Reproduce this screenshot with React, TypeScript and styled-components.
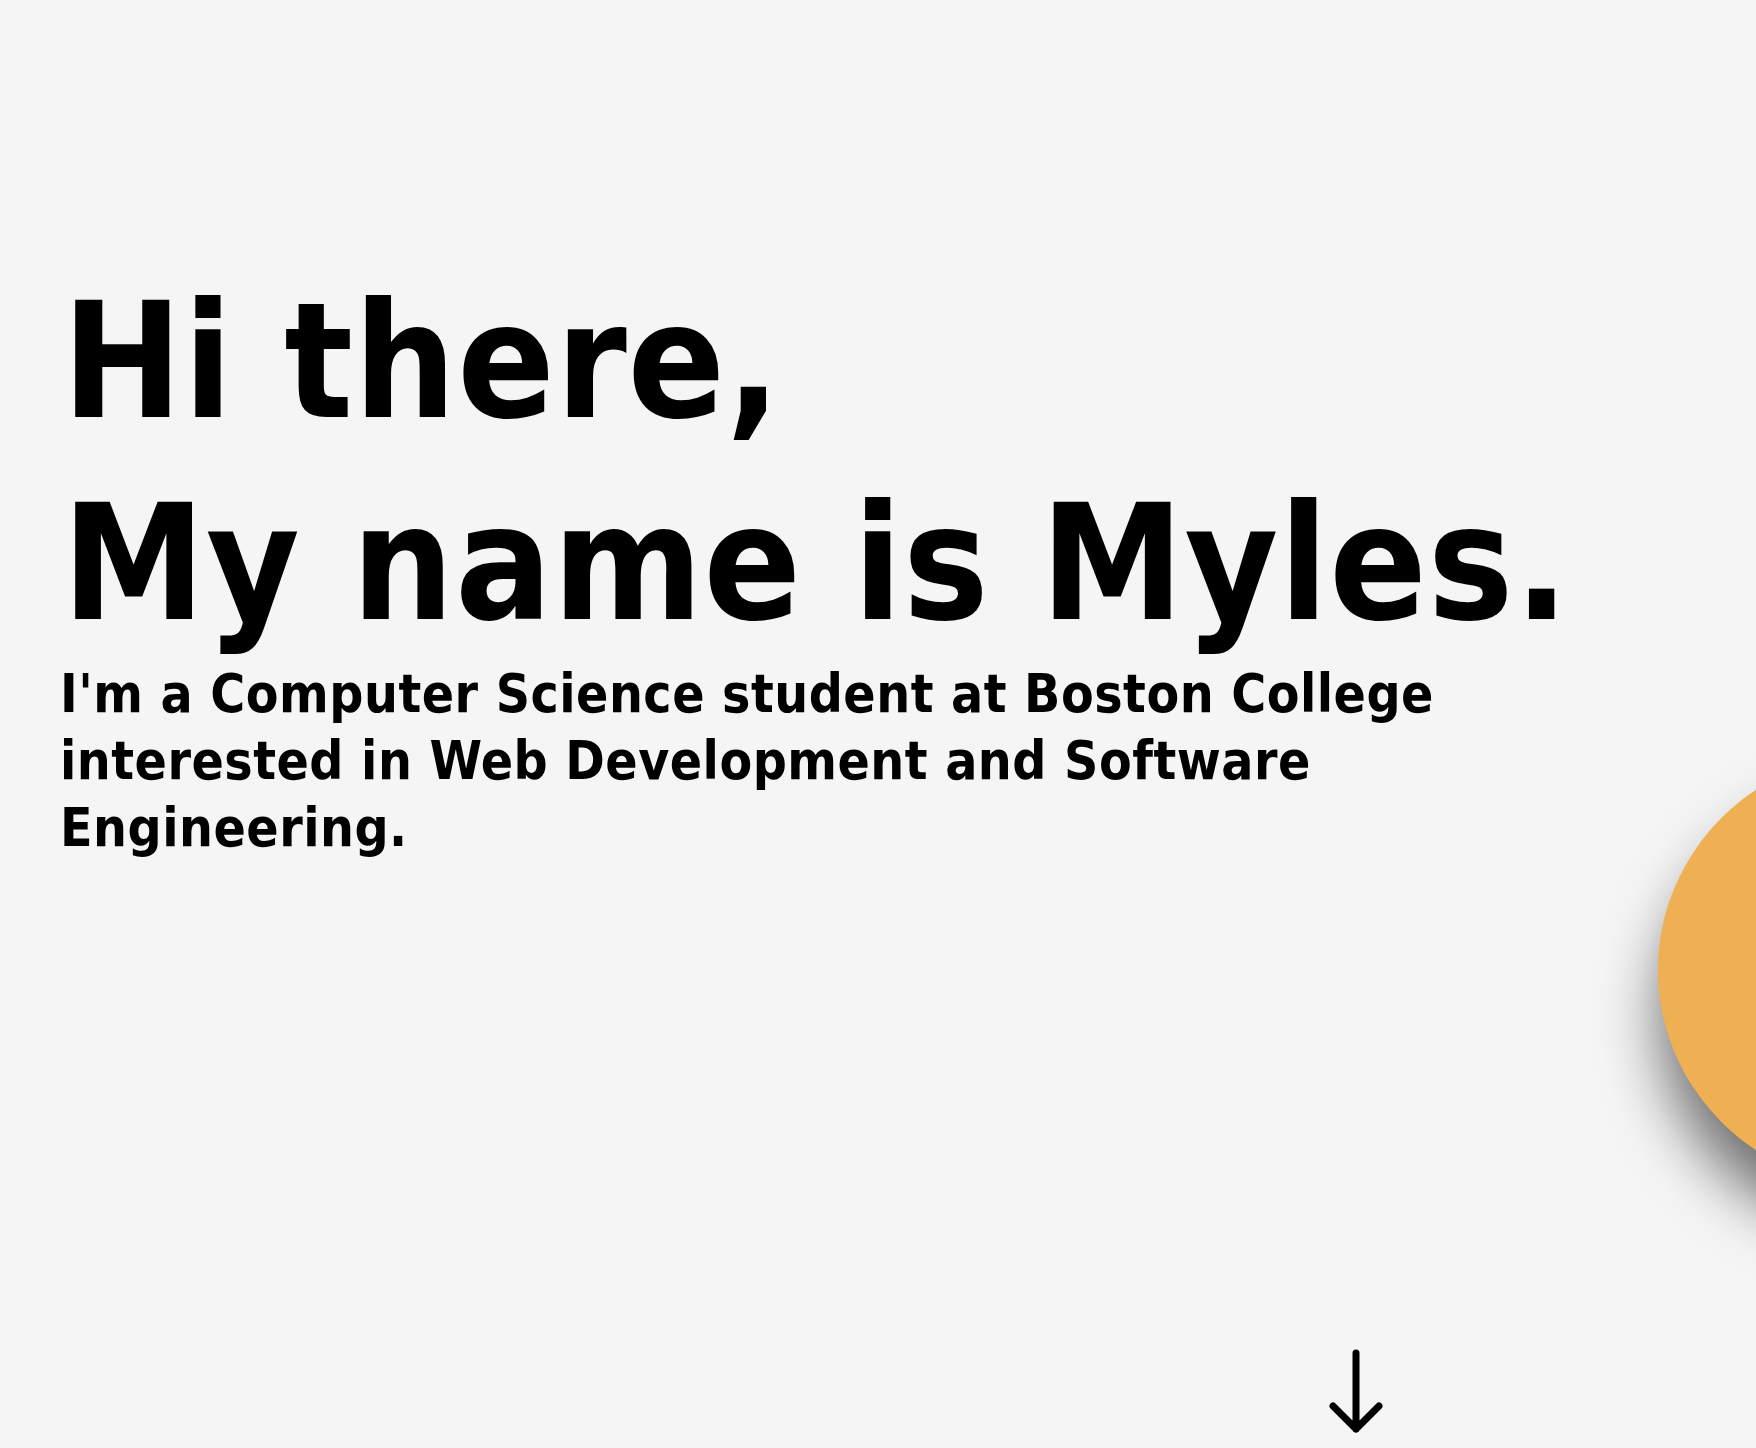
import React from "react";
import styled, { createGlobalStyle } from "styled-components";

const GlobalStyle = createGlobalStyle`
  html, body {
    margin: 0;
    padding: 0;
    background: #f5f5f5;
    overflow: hidden;
  }
  body {
    font-family: "DejaVu Sans Condensed", "DejaVu Sans", sans-serif;
    color: #000;
  }
`;

const Page = styled.main`
  position: relative;
  width: 100%;
  height: 1448px;
  overflow: hidden;
  background: #f5f5f5;
`;

const Hero = styled.section`
  display: flex;
  flex-direction: column;
  padding: 261px 0 0 60px;
`;

const Heading = styled.h1`
  margin: 0 0 0 2px;
  font-family: "DejaVu Sans Condensed", "DejaVu Sans", sans-serif;
  font-weight: 700;
  font-size: 160px;
  line-height: 202px;
  letter-spacing: 0.8px;
  white-space: nowrap;
`;

const Intro = styled.p`
  margin: -5px 0 0 0;
  max-width: 1440px;
  font-family: "DejaVu Sans Condensed", "DejaVu Sans", sans-serif;
  font-weight: 700;
  font-size: 53px;
  line-height: 67px;
  letter-spacing: 0.5px;
`;

const Blob = styled.div`
  position: absolute;
  left: 1658px;
  top: 752px;
  width: 448px;
  height: 436px;
  border-radius: 50%;
  background: #efb054;
  box-shadow: 2px 45px 60px rgba(0, 0, 0, 0.55);
`;

const ScrollCue = styled.a`
  position: absolute;
  left: 1327px;
  top: 1347px;
  width: 58px;
  height: 88px;
  display: block;
  color: #000;
`;

export default function App() {
  return (
    <>
      <GlobalStyle />
      <Page>
        <Blob />
        <Hero>
          <Heading>
            Hi there,
            <br />
            My name is Myles.
          </Heading>
          <Intro>
            I'm a Computer Science student at Boston College interested in Web
            Development and Software Engineering.
          </Intro>
        </Hero>
        <ScrollCue href="#about" aria-label="Scroll down">
          <svg width="58" height="88" viewBox="0 0 58 88" fill="none">
            <path
              d="M29 6 V82 M6 59 L29 82 L52 59"
              stroke="currentColor"
              strokeWidth="7"
              strokeLinecap="round"
              strokeLinejoin="round"
            />
          </svg>
        </ScrollCue>
      </Page>
    </>
  );
}
